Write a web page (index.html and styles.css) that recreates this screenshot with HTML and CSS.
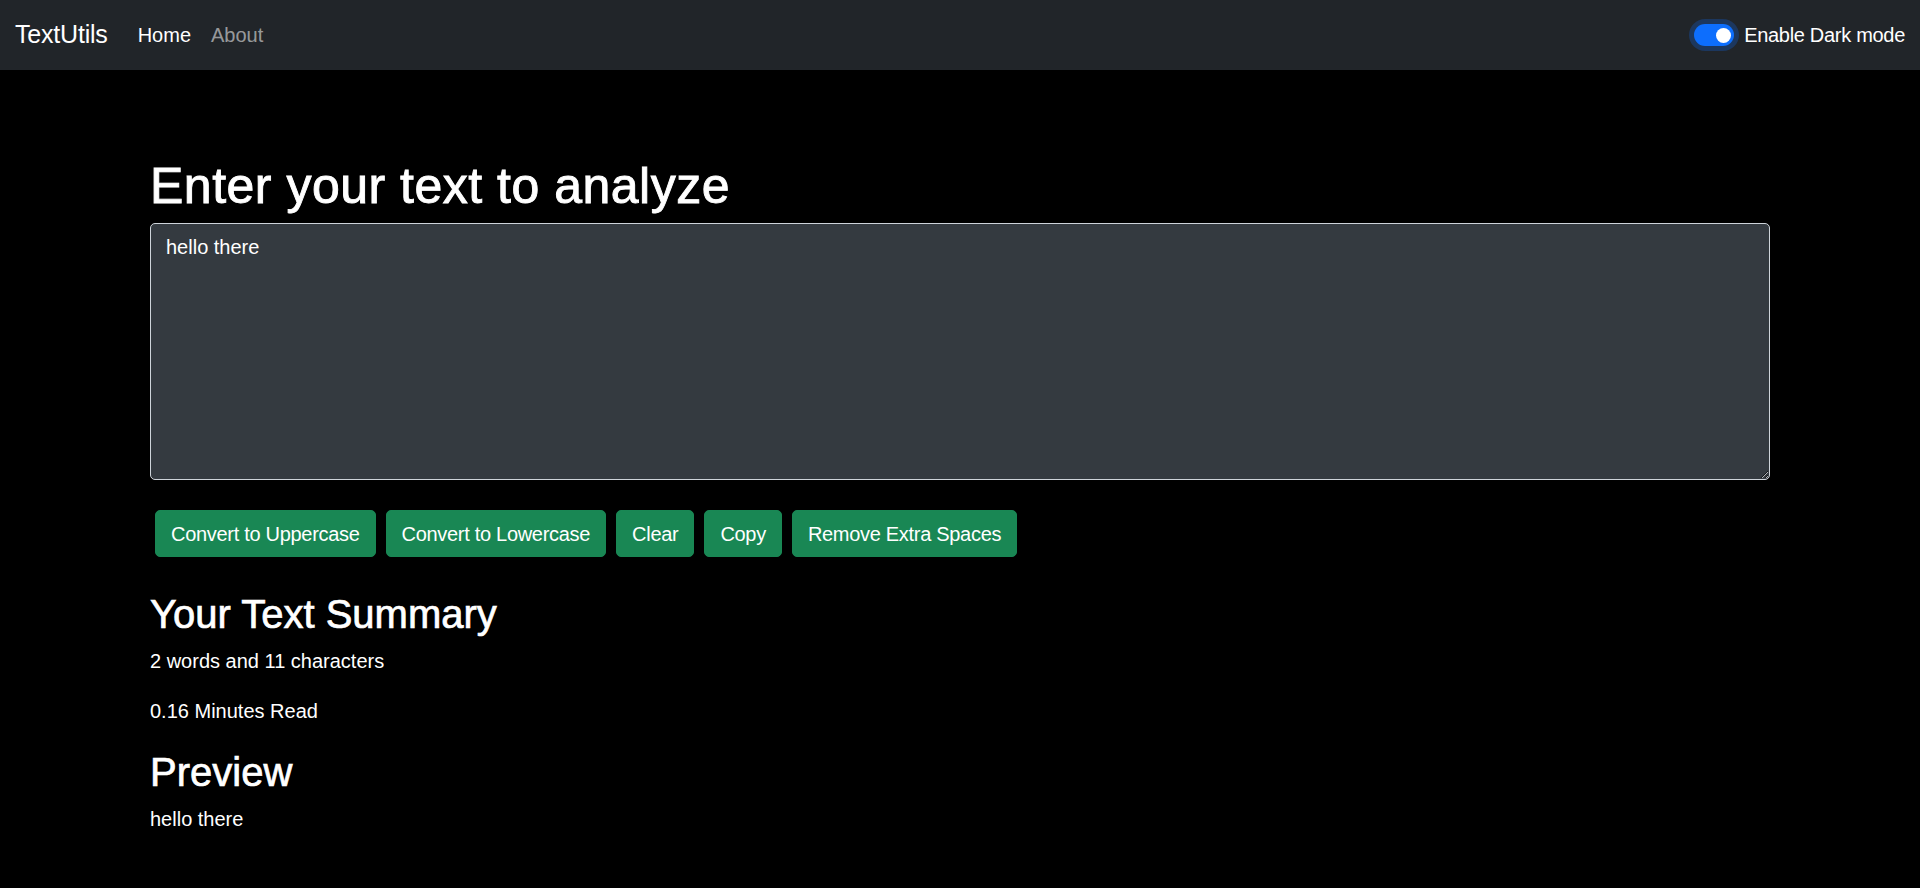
FILE: index.html
```html
<!DOCTYPE html>
<html lang="en">
<head>
<meta charset="utf-8">
<title>TextUtils</title>
<link rel="stylesheet" href="styles.css">
</head>
<body>
<nav class="navbar">
  <div class="nav-left">
    <a class="brand" href="#">TextUtils</a>
    <ul class="nav-links">
      <li><a class="nav-link active" href="#">Home</a></li>
      <li><a class="nav-link" href="#">About</a></li>
    </ul>
  </div>
  <div class="switch-wrap">
    <span class="switch" role="switch" aria-checked="true"></span>
    <label class="switch-label">Enable Dark mode</label>
  </div>
</nav>
<div class="alert-space"></div>
<main class="container first">
  <h1 class="title">Enter your text to analyze</h1>
  <textarea class="text-box" rows="8">hello there</textarea>
  <div class="btn-row">
    <button class="btn">Convert to Uppercase</button>
    <button class="btn">Convert to Lowercase</button>
    <button class="btn">Clear</button>
    <button class="btn">Copy</button>
    <button class="btn">Remove Extra Spaces</button>
  </div>
</main>
<section class="container summary">
  <h2 class="subtitle">Your Text Summary</h2>
  <p class="line">2 words and 11 characters</p>
  <p class="line">0.16 Minutes Read</p>
  <h2 class="subtitle">Preview</h2>
  <p class="line">hello there</p>
</section>
</body>
</html>
```
FILE: styles.css
```css
* { box-sizing: border-box; }
html, body {
  margin: 0;
  padding: 0;
  background: #000;
  color: #fff;
  font-family: "Liberation Sans", Arial, sans-serif;
  font-size: 20px;
  line-height: 1.5;
}
.navbar {
  height: 70px;
  background: #212529;
  display: flex;
  align-items: center;
  justify-content: space-between;
  padding: 10px 15px;
}
.nav-left {
  display: flex;
  align-items: center;
}
.brand {
  font-size: 25px;
  line-height: 37.5px;
  color: #fff;
  text-decoration: none;
  margin-right: 20px;
  letter-spacing: -0.2px;
}
.nav-links {
  list-style: none;
  margin: 0;
  padding: 0;
  display: flex;
}
.nav-link {
  display: block;
  padding: 10px;
  font-size: 20px;
  line-height: 30px;
  color: rgba(255, 255, 255, 0.55);
  text-decoration: none;
}
.nav-link.active { color: #fff; }
.switch-wrap {
  display: flex;
  align-items: center;
  gap: 10px;
}
.switch {
  position: relative;
  width: 40px;
  height: 22px;
  border-radius: 11px;
  background: #0d6efd;
  box-shadow: 0 0 0 5px #1c375e;
}
.switch::after {
  content: "";
  position: absolute;
  right: 3px;
  top: 3.5px;
  width: 15px;
  height: 15px;
  border-radius: 50%;
  background: #fff;
}
.switch-label {
  font-size: 20px;
  line-height: 30px;
  color: #fff;
  letter-spacing: -0.3px;
}
.alert-space { height: 50px; }
.container {
  max-width: 1650px;
  margin: 0 auto;
  padding: 0 15px;
}
.first { padding-top: 13px; }
.title {
  font-size: 50px;
  font-weight: 500;
  line-height: 1.2;
  margin: 23px 0 7px;
  -webkit-text-stroke: 0.9px #fff;
  letter-spacing: 0.5px;
}
.text-box {
  display: block;
  width: 100%;
  height: 257px;
  padding: 7.5px 15px;
  background: #343a40;
  color: #fff;
  border: 1px solid #ced4da;
  border-radius: 5px;
  font-family: inherit;
  font-size: 20px;
  line-height: 1.5;
  margin: 0 0 30px;
  resize: vertical;
}
.btn-row {
  display: flex;
  flex-wrap: wrap;
  gap: 10px;
  padding: 0 5px;
}
.btn {
  background: #198754;
  border: 1px solid #198754;
  color: #fff;
  padding: 7.5px 15px;
  font-family: inherit;
  font-size: 20px;
  line-height: 1.5;
  border-radius: 5px;
  letter-spacing: -0.3px;
}
.summary { padding-top: 31px; }
.subtitle {
  font-size: 40px;
  font-weight: 500;
  line-height: 1.2;
  margin: 0 0 8px;
  padding-top: 2px;
  -webkit-text-stroke: 0.7px #fff;
}
.line {
  margin: 0 0 20px;
  font-size: 20px;
  line-height: 30px;
}
.summary .line:last-child { margin-bottom: 0; }
```
